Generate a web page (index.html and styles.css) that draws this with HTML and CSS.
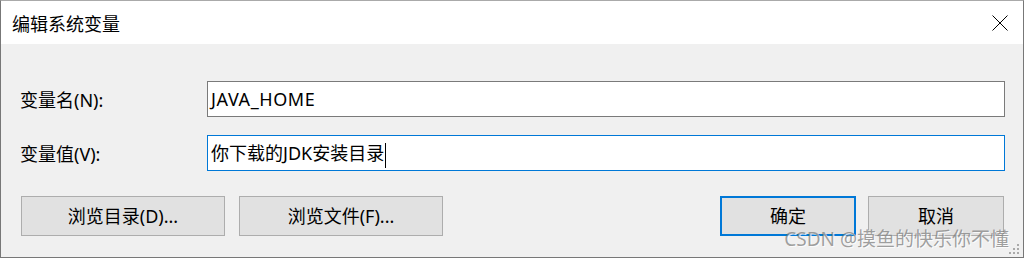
FILE: index.html
```html
<!DOCTYPE html>
<html lang="zh-CN">
<head>
    <meta charset="UTF-8">
    <title>编辑系统变量</title>
    <link rel="stylesheet" href="styles.css">
</head>
<body>
    <div class="dialog">
        <div class="titlebar">
            <span class="title">编辑系统变量</span>
            <svg class="close" width="16" height="16" viewBox="0 0 16 16">
                <path d="M0.5 0.5 L15.5 15.5 M15.5 0.5 L0.5 15.5" stroke="#000" stroke-width="1" fill="none"/>
            </svg>
        </div>
        <div class="content">
            <div class="fields">
                <label class="field-label">变量名(N):</label>
                <div class="field">JAVA_HOME</div>
                <label class="field-label">变量值(V):</label>
                <div class="field focused">你下载的JDK安装目录<span class="caret"></span></div>
            </div>
            <div class="buttons">
                <div class="left-buttons">
                    <div class="btn wide">浏览目录(D)...</div>
                    <div class="btn wide">浏览文件(F)...</div>
                </div>
                <div class="right-buttons">
                    <div class="btn default">确定</div>
                    <div class="btn">取消</div>
                </div>
            </div>
        </div>
        <div class="watermark">CSDN @摸鱼的快乐你不懂</div>
        <svg class="grip" width="12" height="12" viewBox="0 0 12 12">
            <rect x="8" y="0" width="2" height="2" fill="#aaa"/>
            <rect x="4" y="4" width="2" height="2" fill="#aaa"/>
            <rect x="8" y="4" width="2" height="2" fill="#aaa"/>
            <rect x="0" y="8" width="2" height="2" fill="#aaa"/>
            <rect x="4" y="8" width="2" height="2" fill="#aaa"/>
            <rect x="8" y="8" width="2" height="2" fill="#aaa"/>
        </svg>
    </div>
</body>
</html>
```

FILE: styles.css
```css
body {
    margin: 0;
    background: #fff;
    font-family: "Noto Sans", "Noto Sans CJK SC", sans-serif;
    color: #000;
}
.dialog {
    position: relative;
    width: 1024px;
    height: 258px;
    box-sizing: border-box;
    border: 1px solid #777;
    border-top-color: #aaa;
    background: #f0f0f0;
}
.titlebar {
    height: 43px;
    background: #fff;
    display: flex;
    align-items: center;
    justify-content: space-between;
    padding: 0 15px 0 11px;
}
.title {
    font-size: 18px;
}
.close {
    display: block;
}
.content {
    padding: 37px 18px 0 19px;
}
.fields {
    display: grid;
    grid-template-columns: 187px 1fr;
    row-gap: 18px;
    align-items: center;
}
.field-label {
    font-size: 18px;
}
.field {
    height: 36px;
    box-sizing: border-box;
    border: 1px solid #7a7a7a;
    background: #fff;
    padding: 0 3px;
    font-size: 18px;
    line-height: 34px;
    white-space: nowrap;
    letter-spacing: 0.6px;
}
.field.focused {
    border-color: #0078d7;
    letter-spacing: 0;
}
.caret {
    display: inline-block;
    width: 1px;
    height: 25px;
    background: #000;
    vertical-align: middle;
    margin-left: 1px;
}
.buttons {
    display: flex;
    justify-content: space-between;
    margin-top: 25px;
    padding: 0 1px 0 1px;
}
.left-buttons, .right-buttons {
    display: flex;
    gap: 14px;
}
.right-buttons {
    gap: 12px;
}
.btn {
    width: 136px;
    height: 40px;
    box-sizing: border-box;
    border: 1px solid #adadad;
    background: #e1e1e1;
    display: flex;
    align-items: center;
    justify-content: center;
    font-size: 18px;
    line-height: 1;
}
.btn.wide {
    width: 204px;
}
.btn.default {
    border: 2px solid #0078d7;
}
.watermark {
    position: absolute;
    right: 14px;
    bottom: 8px;
    font-size: 19px;
    line-height: 19px;
    color: rgba(120, 120, 120, 0.7);
    text-shadow: 1px 1px 0 rgba(255, 255, 255, 0.8);
    white-space: nowrap;
}
.grip {
    position: absolute;
    right: 2px;
    bottom: 1px;
}
```
